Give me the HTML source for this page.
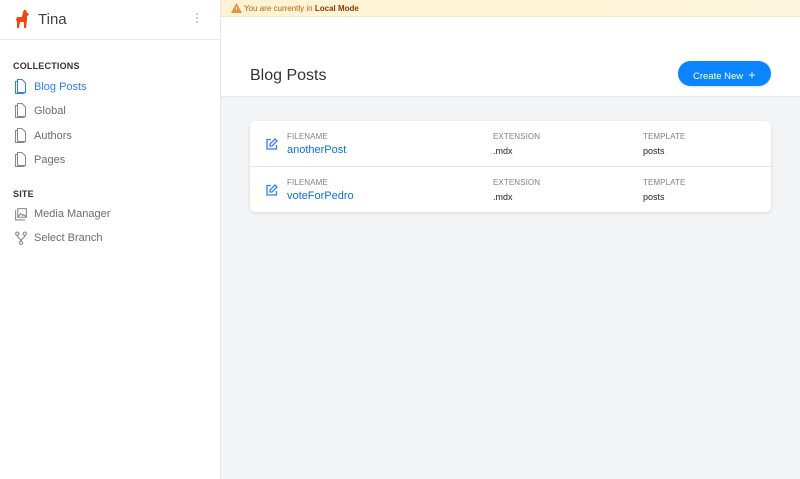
<!DOCTYPE html><html><head><style>
*{box-sizing:border-box;margin:0;padding:0}
body{width:800px;height:479px;overflow:hidden;font-family:"Liberation Sans",sans-serif;background:#f3f4f6;position:relative}
.sb{position:absolute;left:0;top:0;width:221px;height:479px;background:#fff;border-right:1px solid #e5e7eb}
.hd{height:40px;border-bottom:1px solid #e5e7eb;position:relative}
.t{position:absolute;left:38px;top:11px;font-size:15px;color:#404040}
.dots{position:absolute;left:196px;top:13px;width:3px}
.dots i{display:block;width:2px;height:2px;background:#bbb;border-radius:1px;margin-bottom:2px}
.sec{position:absolute;left:13px;font-size:9px;font-weight:bold;color:#333;letter-spacing:.2px}
.it{position:absolute;left:14px;font-size:11px;color:#6b6b73;display:flex;align-items:center}
.it svg{margin-right:6px}
.ban{position:absolute;left:221px;top:0;right:0;height:17px;background:linear-gradient(90deg,#fdf3d4,#fef6dc);border-bottom:1px solid #f7e6b0;font-size:8px;color:#c2600b;padding:4px 0 0 23px}
.top{position:absolute;left:221px;top:17px;right:0;height:80px;background:#fff;border-bottom:1px solid #e5e7eb}
h1{position:absolute;left:29px;top:50px;font-size:16px;font-weight:normal;color:#333}
.btn{position:absolute;left:457px;top:44px;width:93px;height:25px;border-radius:13px;background:#0a84ff;color:#fff;font-size:9.5px;padding:7px 0 0 15px;box-shadow:0 1px 2px rgba(0,0,0,.15)}
.card{position:absolute;left:250px;top:121px;width:521px;height:91px;background:#fff;border-radius:5px;box-shadow:0 1px 3px rgba(0,0,0,.12)}
.row{position:relative;height:45px}
.row+.row{border-top:1px solid #e5e7eb;height:46px}
.l{position:absolute;top:11px;font-size:8px;color:#808088;letter-spacing:.1px}
.v{position:absolute;top:25px;font-size:9px;color:#222}
.fn{font-size:11px;color:#0a6fe0;top:23px}
.ic{position:absolute;left:16px;top:17px}
</style></head><body>
<div class="sb">
<div class="hd">
<svg style="position:absolute;left:15px;top:9px" width="16" height="20" viewBox="0 0 16 20"><path d="M9 1l2 0 1 3 1 0 1 2-2 1 0 4-1 8-2 0 0-6-4 0-1 6-2 0 0-6-1-2 1-3 5 0 1-5z" fill="#ec4815"/></svg>
<span class="t">Tina</span>
<div class="dots"><i></i><i></i><i></i></div>
</div>
<div class="sec" style="top:61px">COLLECTIONS</div>
<div class="sec" style="top:189px">SITE</div>
<div class="it" style="top:79px;color:#2f80ed"><svg width="14" height="15" viewBox="0 0 14 15" fill="none" stroke="#2f80ed"><path d="M3 2.5H1.5v12H10v-1M3.5.5h4.5l3.5 3.5v9.5h-8z"/></svg>Blog Posts</div>
<div class="it" style="top:103px"><svg width="14" height="15" viewBox="0 0 14 15" fill="none" stroke="#888"><path d="M3 2.5H1.5v12H10v-1M3.5.5h4.5l3.5 3.5v9.5h-8z"/></svg>Global</div>
<div class="it" style="top:128px"><svg width="14" height="15" viewBox="0 0 14 15" fill="none" stroke="#888"><path d="M3 2.5H1.5v12H10v-1M3.5.5h4.5l3.5 3.5v9.5h-8z"/></svg>Authors</div>
<div class="it" style="top:152px"><svg width="14" height="15" viewBox="0 0 14 15" fill="none" stroke="#888"><path d="M3 2.5H1.5v12H10v-1M3.5.5h4.5l3.5 3.5v9.5h-8z"/></svg>Pages</div>
<div class="it" style="top:207px"><svg width="14" height="14" viewBox="0 0 13 13" fill="none" stroke="#888"><path d="M1.5 3v9h9M3.5 1.5h8v8h-8zM4 9l2-3 2 2 1-1 2 2"/></svg>Media Manager</div>
<div class="it" style="top:231px"><svg width="14" height="14" viewBox="0 0 13 13" fill="none" stroke="#888"><circle cx="3" cy="2.5" r="1.5"/><circle cx="10" cy="2.5" r="1.5"/><circle cx="6.5" cy="11" r="1.5"/><path d="M3 4c0 3 3.5 3 3.5 5.5M10 4c0 3-3.5 3-3.5 5.5"/></svg>Select Branch</div>
</div>
<div class="ban"><svg style="position:absolute;left:10px;top:3px" width="11" height="10" viewBox="0 0 11 10"><path d="M5.5 0L11 10H0z" fill="#e8903a"/><path d="M5.5 4v3" stroke="#fff"/></svg>You are currently in <b style="color:#8a3a06">Local Mode</b></div>
<div class="top"><h1>Blog Posts</h1><div class="btn">Create New&nbsp; <span style="font-size:12px">+</span></div></div>
<div class="card">
<div class="row"><svg class="ic" width="12" height="12" viewBox="0 0 12 12" fill="none" stroke="#2f80ed" stroke-width="1.3"><path d="M5 1.5H1v9.5h9.5V7M9 1l2 2-5 5H4V6z"/></svg>
<span class="l" style="left:37px">FILENAME</span><span class="v fn" style="left:37px">anotherPost</span>
<span class="l" style="left:243px">EXTENSION</span><span class="v" style="left:243px">.mdx</span>
<span class="l" style="left:393px">TEMPLATE</span><span class="v" style="left:393px">posts</span></div>
<div class="row"><svg class="ic" width="12" height="12" viewBox="0 0 12 12" fill="none" stroke="#2f80ed" stroke-width="1.3"><path d="M5 1.5H1v9.5h9.5V7M9 1l2 2-5 5H4V6z"/></svg>
<span class="l" style="left:37px">FILENAME</span><span class="v fn" style="left:37px">voteForPedro</span>
<span class="l" style="left:243px">EXTENSION</span><span class="v" style="left:243px">.mdx</span>
<span class="l" style="left:393px">TEMPLATE</span><span class="v" style="left:393px">posts</span></div>
</div>
</body></html>
